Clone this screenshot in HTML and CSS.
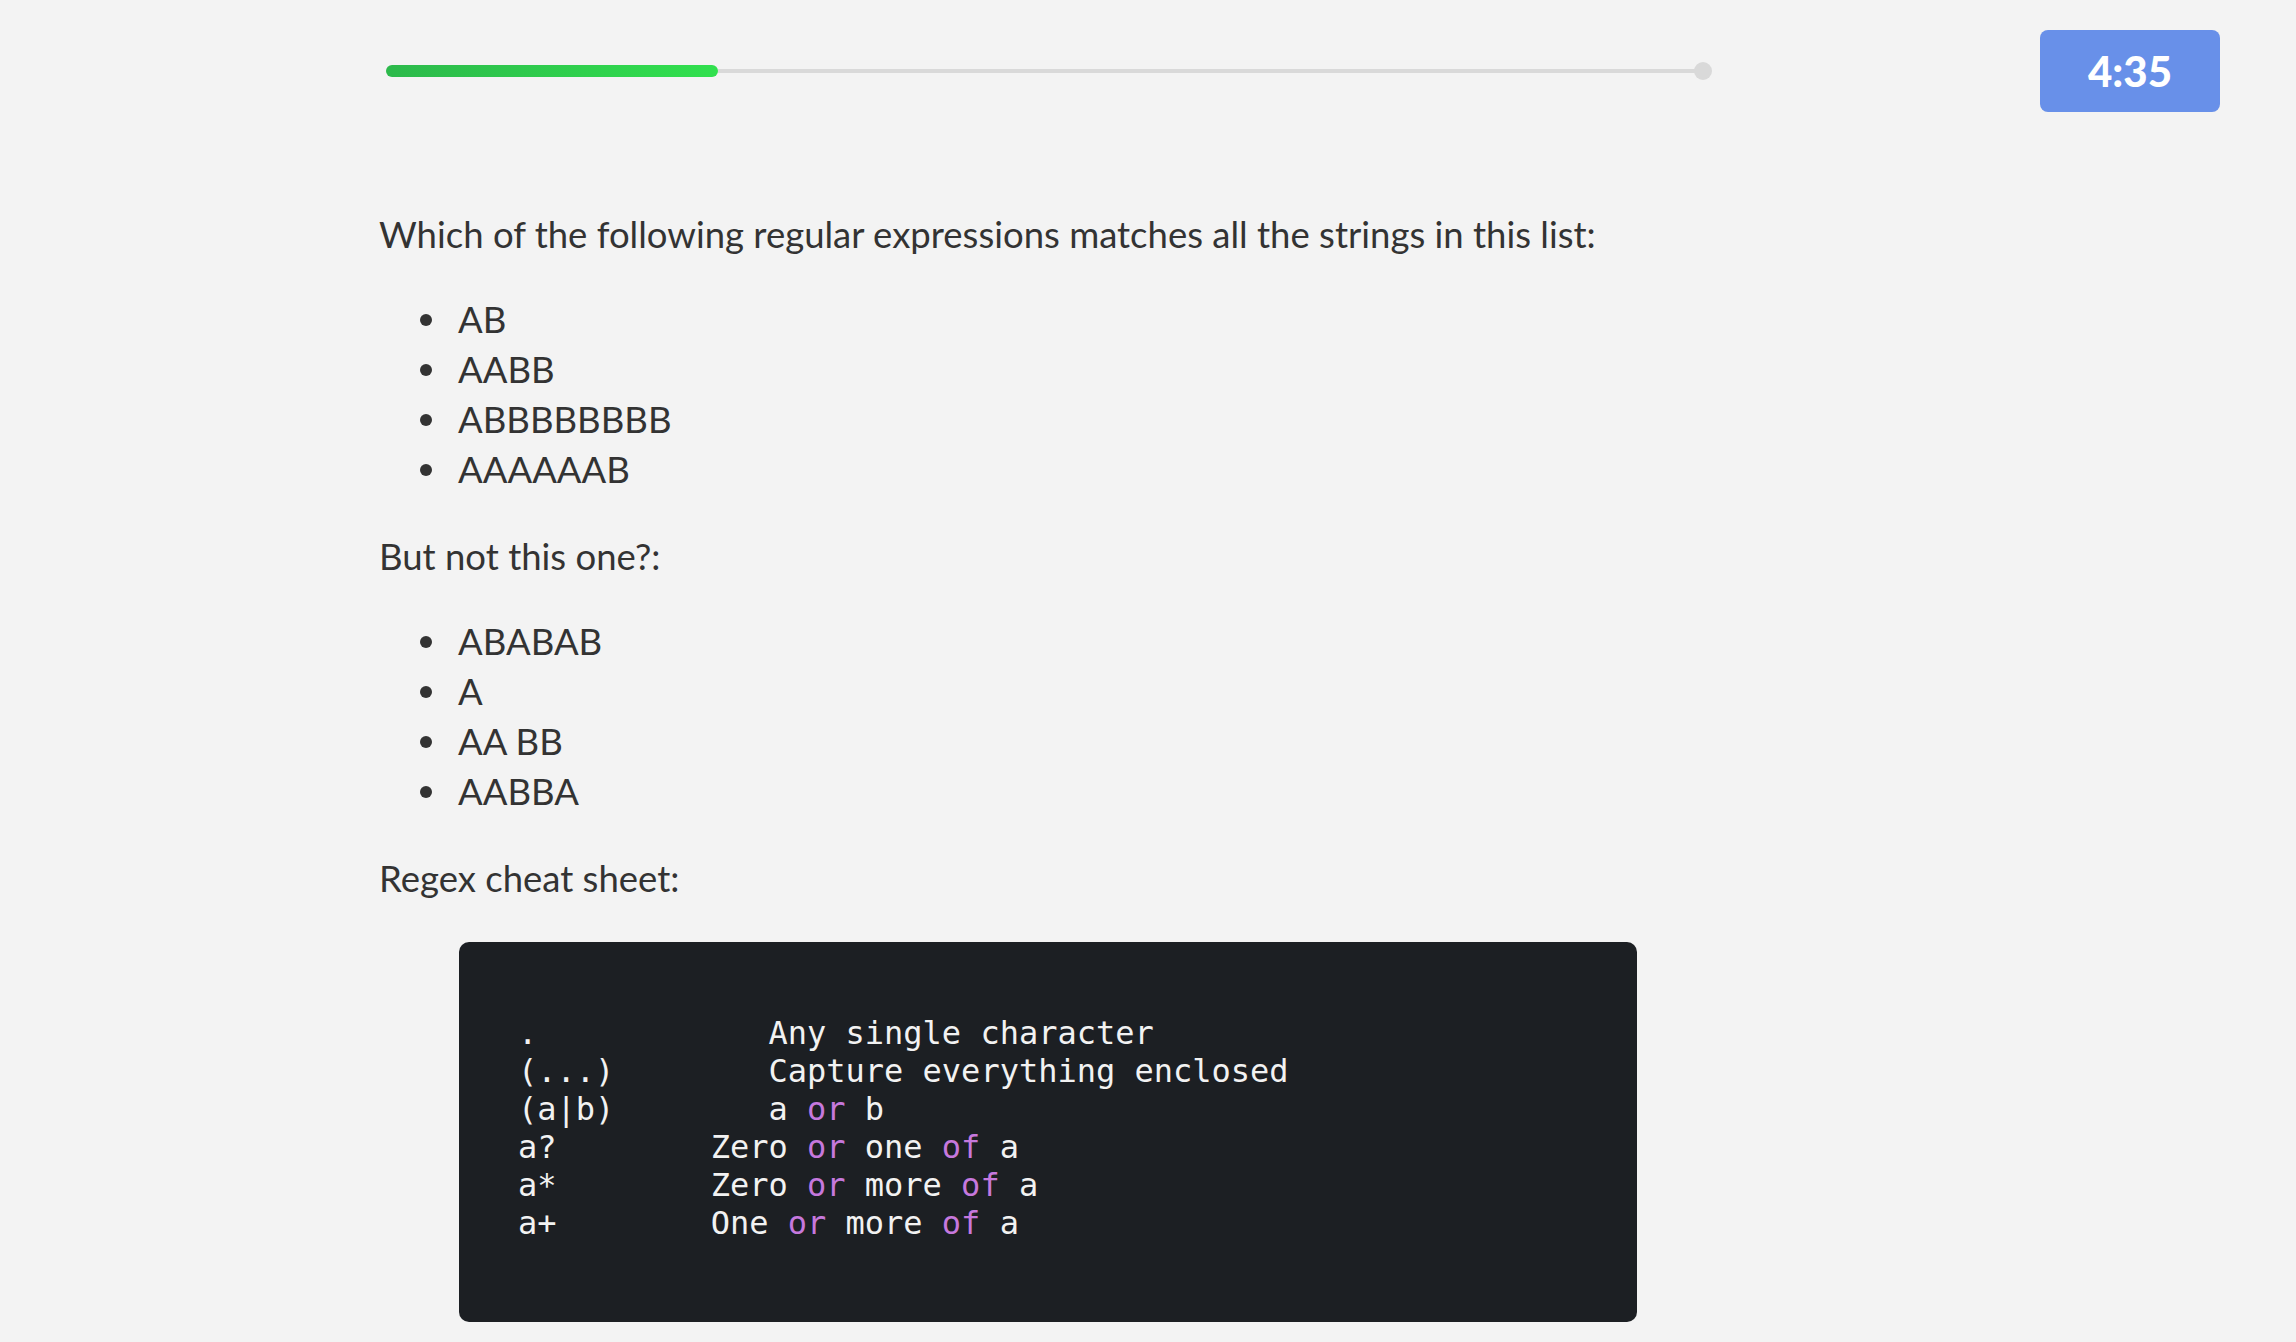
FILE: index.html
```html
<!DOCTYPE html>
<html>
<head>
<meta charset="utf-8">
<link rel="stylesheet" href="styles.css">
</head>
<body>
<header class="top">
  <div class="progress">
    <div class="fill"></div>
    <div class="track"></div>
    <div class="dot"></div>
  </div>
  <div class="timer">4:35</div>
</header>
<main class="content">
  <p class="para">Which of the following regular expressions matches all the strings in this list:</p>
  <ul class="list">
    <li>AB</li>
    <li>AABB</li>
    <li>ABBBBBBBB</li>
    <li>AAAAAAB</li>
  </ul>
  <p class="para">But not this one?:</p>
  <ul class="list">
    <li>ABABAB</li>
    <li>A</li>
    <li>AA BB</li>
    <li>AABBA</li>
  </ul>
  <p class="para">Regex cheat sheet:</p>
  <pre class="code">.            Any single character
(...)        Capture everything enclosed
(a|b)        a <span class="kw">or</span> b
a?        Zero <span class="kw">or</span> one <span class="kw">of</span> a
a*        Zero <span class="kw">or</span> more <span class="kw">of</span> a
a+        One <span class="kw">or</span> more <span class="kw">of</span> a</pre>
</main>
</body>
</html>
```
FILE: styles.css
```css
html, body {
  margin: 0;
  padding: 0;
  background: #f3f3f3;
}
body {
  font-family: Lato, "Open Sans", sans-serif;
  color: #333333;
}
.top {
  display: flex;
  align-items: center;
  padding: 30px 76px 0 386px;
}
.progress {
  display: flex;
  align-items: center;
  width: 1326px;
  height: 18px;
}
.fill {
  width: 332px;
  height: 12px;
  border-radius: 6px;
  background: linear-gradient(90deg, #2cb94b, #31e04e);
  flex: none;
}
.track {
  flex: 1;
  height: 4px;
  background: #d9d9d9;
}
.dot {
  width: 18px;
  height: 18px;
  border-radius: 50%;
  background: #d9d9d9;
  flex: none;
  margin-left: -2px;
}
.timer {
  margin-left: auto;
  width: 180px;
  height: 82px;
  border-radius: 8px;
  background: #6890e9;
  color: #ffffff;
  font-weight: 900;
  font-size: 42px;
  display: flex;
  align-items: center;
  justify-content: center;
}
.content {
  margin-left: 379px;
  width: 1338px;
  padding-top: 97px;
}
.para {
  margin: 0 0 35px 0;
  font-size: 36.5px;
  line-height: 50px;
}
.list {
  margin: 0 0 37px 0;
  padding-left: 41px;
  list-style: none;
  font-size: 36.5px;
  line-height: 50px;
}
.list li {
  display: flex;
  align-items: center;
}
.list li::before {
  content: "";
  flex: none;
  width: 12px;
  height: 12px;
  border-radius: 50%;
  background: #333333;
  margin-right: 26px;
  margin-top: 2px;
}
.code {
  margin: 39px 80px 0;
  padding: 72px 59px 80px;
  background: #1c1f23;
  border-radius: 10px;
  color: #f2f2f2;
  font-family: "DejaVu Sans Mono", monospace;
  font-size: 32px;
  line-height: 38px;
}
.kw {
  color: #c678dd;
}
```
